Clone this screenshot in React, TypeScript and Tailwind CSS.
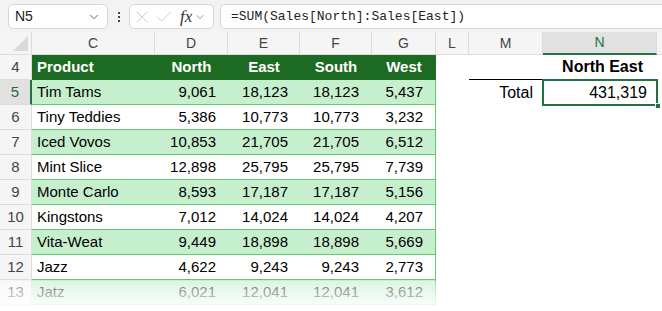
import { ChevronDown, X, Check } from "lucide-react";

const rows = [
  ["Tim Tams", "9,061", "18,123", "18,123", "5,437"],
  ["Tiny Teddies", "5,386", "10,773", "10,773", "3,232"],
  ["Iced Vovos", "10,853", "21,705", "21,705", "6,512"],
  ["Mint Slice", "12,898", "25,795", "25,795", "7,739"],
  ["Monte Carlo", "8,593", "17,187", "17,187", "5,156"],
  ["Kingstons", "7,012", "14,024", "14,024", "4,207"],
  ["Vita-Weat", "9,449", "18,898", "18,898", "5,669"],
  ["Jazz", "4,622", "9,243", "9,243", "2,773"],
  ["Jatz", "6,021", "12,041", "12,041", "3,612"],
];

const cols = ["C", "D", "E", "F", "G", "L", "M", "N"];
const grid = "grid grid-cols-[32px_123px_73px_72px_72px_64px_33px_74px_114px_1fr]";

export default function App() {
  return (
    <div className="relative w-[662px] h-[311px] overflow-hidden bg-white font-['Liberation_Sans',Arial,sans-serif] text-black">
      {/* formula bar */}
      <div className="flex h-[32px] items-start bg-[#f3f3f3] pt-[4px] pl-[8px]">
        <div className="flex h-[25px] w-[100px] items-center justify-between rounded-[5px] border border-[#d6d6d6] bg-white pl-[6px] pr-[6px] text-[14px] text-[#222]">
          <span>N5</span>
          <ChevronDown className="h-[14px] w-[14px] text-[#555]" strokeWidth={1.5} />
        </div>
        <div className="flex h-[25px] w-[21px] flex-col items-center justify-center gap-[2px]">
          <span className="h-[2px] w-[2px] bg-[#444]" />
          <span className="h-[2px] w-[2px] bg-[#444]" />
          <span className="h-[2px] w-[2px] bg-[#444]" />
        </div>
        <div className="flex h-[25px] w-[85px] items-center rounded-[5px] border border-[#d6d6d6] bg-white pl-[2px]">
          <X className="h-[20px] w-[20px] text-[#c4c4c4]" strokeWidth={1} />
          <Check className="ml-[2px] h-[20px] w-[20px] text-[#c4c4c4]" strokeWidth={1} />
          <span className="ml-[6px] font-['Liberation_Serif',serif] text-[17px] italic text-[#333]">fx</span>
          <ChevronDown className="ml-[2px] h-[12px] w-[12px] text-[#777]" strokeWidth={1.5} />
        </div>
        <div className="ml-[6px] flex h-[25px] flex-1 items-center rounded-l-[5px] border border-r-0 border-[#d6d6d6] bg-white pl-[10px] font-['Liberation_Mono',monospace] text-[13px] text-[#222]">
          =SUM(Sales[North]:Sales[East])
        </div>
      </div>

      {/* column headers */}
      <div className={`${grid} h-[23px] bg-[#f5f5f5] text-[14px] text-[#444]`}>
        <div className="relative border-r border-b border-[#dcdcdc]">
          <svg className="absolute right-[3px] bottom-[3px]" width="15" height="15" viewBox="0 0 15 15">
            <polygon points="15,0 15,15 0,15" fill="#dadada" />
          </svg>
        </div>
        {cols.map((c) =>
          c === "N" ? (
            <div key={c} className="flex items-center justify-center border-r border-b-2 border-r-[#dcdcdc] border-b-[#217346] bg-[#e1e1e1] text-[#1e7145]">
              {c}
            </div>
          ) : (
            <div key={c} className="flex items-center justify-center border-r border-b border-[#dcdcdc]">
              {c}
            </div>
          )
        )}
        <div className="border-b border-[#dcdcdc]" />
      </div>

      {/* header row 4 */}
      <div className={`${grid} h-[25px] text-[15px]`}>
        <div className="flex items-center justify-center border-r border-b border-[#dcdcdc] bg-[#f5f5f5] text-[#444]">4</div>
        <div className="flex items-center bg-[#1d6b23] pl-[5px] font-bold text-white">Product</div>
        <div className="flex items-center justify-center bg-[#1d6b23] font-bold text-white">North</div>
        <div className="flex items-center justify-center bg-[#1d6b23] font-bold text-white">East</div>
        <div className="flex items-center justify-center bg-[#1d6b23] font-bold text-white">South</div>
        <div className="flex items-center justify-center bg-[#1d6b23] font-bold text-white">West</div>
        <div />
        <div className="border-b border-black" />
        <div className="flex items-center justify-end border-b border-black pr-[14px] text-[16px] font-bold">North East</div>
        <div />
      </div>

      {/* data rows */}
      {rows.map((r, i) => {
        const shaded = i % 2 === 0;
        const bg = shaded ? "bg-[#c6efce]" : "bg-white";
        const sel = i === 0;
        return (
          <div key={i} className={`${grid} h-[25px] text-[15px]`}>
            <div
              className={
                sel
                  ? "flex items-center justify-center border-b border-r-2 border-b-[#dcdcdc] border-r-[#217346] bg-[#e1e1e1] text-[#1e6b40]"
                  : "flex items-center justify-center border-r border-b border-[#dcdcdc] bg-[#f5f5f5] text-[#444]"
              }
            >
              {i + 5}
            </div>
            <div className={`flex items-center border-b border-[#5fcb6c] pl-[5px] ${bg}`}>{r[0]}</div>
            <div className={`flex items-center justify-end border-b border-[#5fcb6c] pr-[12px] ${bg}`}>{r[1]}</div>
            <div className={`flex items-center justify-end border-b border-[#5fcb6c] pr-[12px] ${bg}`}>{r[2]}</div>
            <div className={`flex items-center justify-end border-b border-[#5fcb6c] pr-[13px] ${bg}`}>{r[3]}</div>
            <div className={`flex items-center justify-end border-r border-b border-[#5fcb6c] pr-[12px] ${bg}`}>{r[4]}</div>
            <div />
            {sel ? (
              <div className="flex items-center justify-end pr-[10px] text-[16px]">Total</div>
            ) : (
              <div />
            )}
            {sel ? (
              <div className="relative flex items-center justify-end pr-[10px] text-[16px]">
                431,319
                <div className="absolute inset-[-1px] border-2 border-[#217346]" />
                <div className="absolute right-[-4px] bottom-[-4px] h-[6px] w-[6px] border border-white bg-[#217346]" />
              </div>
            ) : (
              <div />
            )}
            <div />
          </div>
        );
      })}

      {/* fade at bottom */}
      <div className="pointer-events-none absolute left-0 right-0 top-[281px] h-[30px] bg-gradient-to-b from-white/40 to-white" />
    </div>
  );
}
